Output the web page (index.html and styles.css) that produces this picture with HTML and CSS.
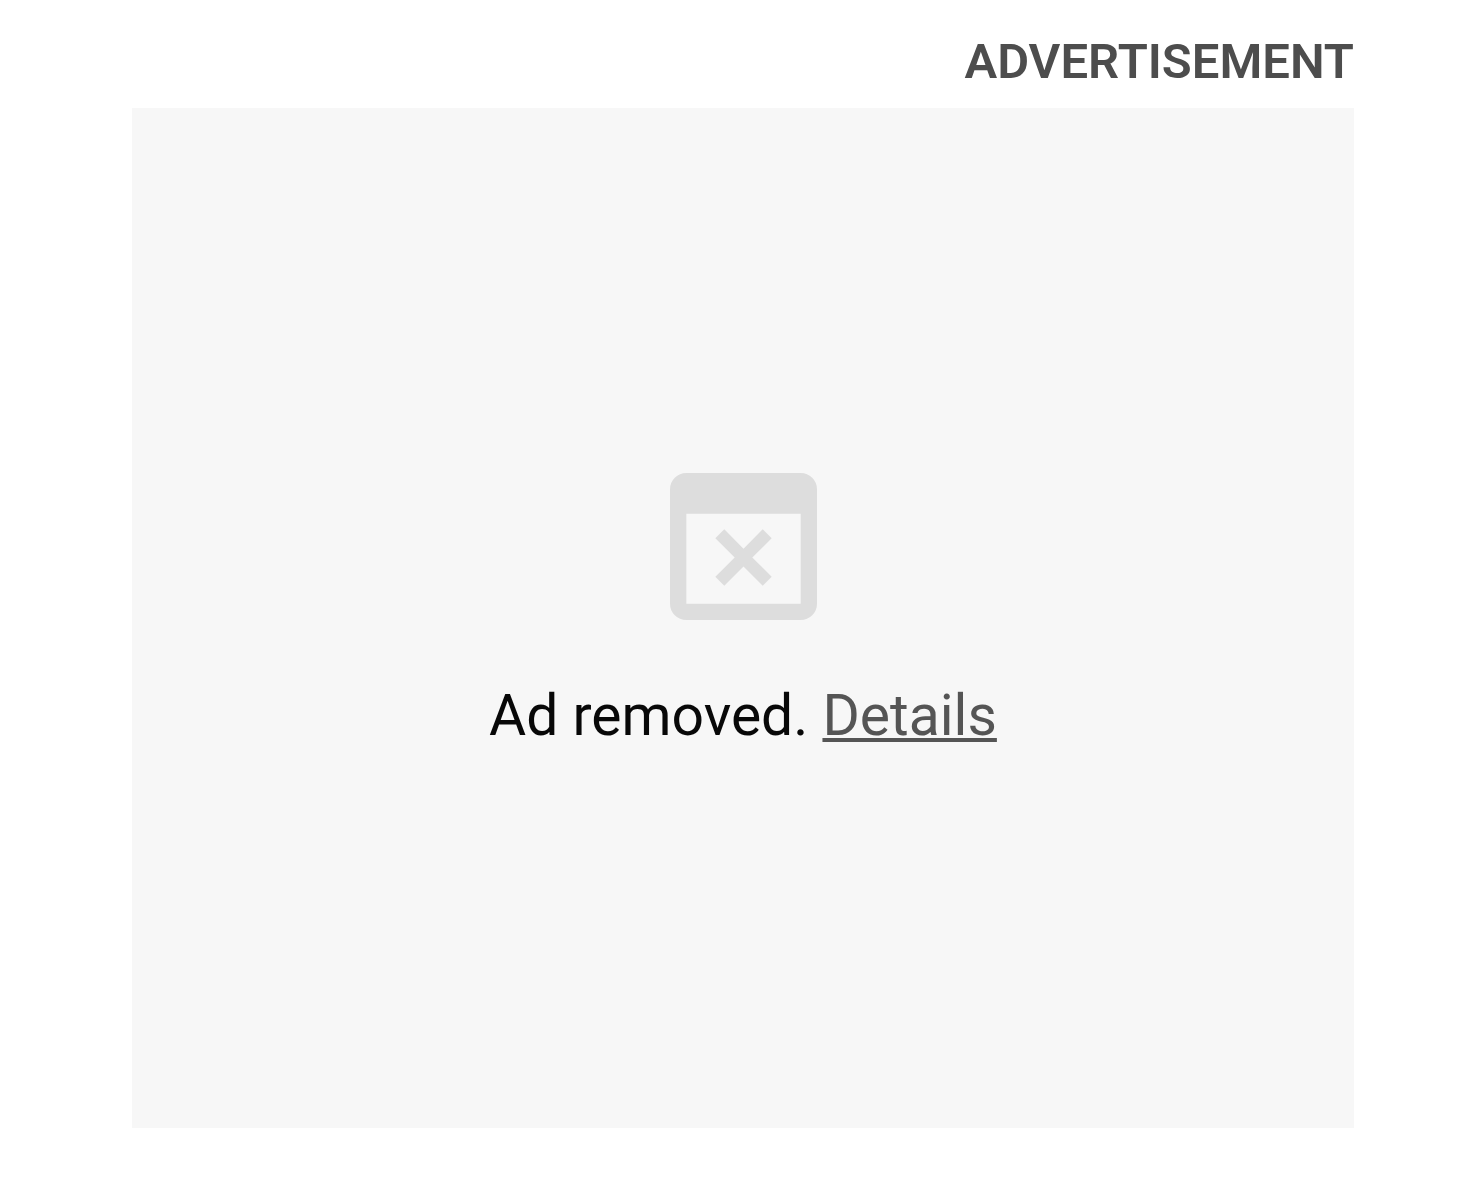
FILE: index.html
```
<!DOCTYPE html>
<html lang="en">
<head>
  <meta charset="UTF-8">
  <meta name="viewport" content="width=device-width, initial-scale=1.0">
  <title>Advertisement</title>
  <link rel="stylesheet" href="styles.css">
</head>
<body>

<aside class="ad">
  <h2 class="ad-label">Advertisement</h2>

  <div class="ad-slot">
    <!-- Closed window icon -->
    <svg class="ad-icon" viewBox="0 0 18 18" aria-hidden="true">
      <path fill-rule="evenodd" d="M2 0h14a2 2 0 0 1 2 2v14a2 2 0 0 1-2 2H2a2 2 0 0 1-2-2V2a2 2 0 0 1 2-2zM2 5v11h14V5z"/>
      <path d="M6.65 6.9L9 9.27l2.35-2.37 1.1 1.1-2.37 2.35 2.37 2.35-1.1 1.12L9 11.45l-2.35 2.37-1.1-1.12 2.37-2.35L5.55 8z"/>
    </svg>
    <p class="ad-text">Ad removed. <a href="#" class="ad-link">Details</a></p>
  </div>
</aside>

</body>
</html>
```

FILE: styles.css
```
* {
  margin: 0;
  padding: 0;
  box-sizing: border-box;
}

body {
  font-family: Roboto, Arial, sans-serif;
  background-color: #fff;
  color: #080808;
}

.ad {
  padding: 32px 106px 52px 132px;
}

/* Label above the slot */
.ad-label {
  margin-bottom: 16px;
  font-size: 49px;
  font-weight: 600;
  line-height: 60px;
  text-align: right;
  text-transform: uppercase;
  color: #4d4d4d;
}

/* Grey placeholder */
.ad-slot {
  display: flex;
  flex-direction: column;
  align-items: center;
  justify-content: center;
  gap: 56px;
  aspect-ratio: 1.198;
  padding-bottom: 8px;
  background-color: #f7f7f7;
}

.ad-icon {
  width: 147px;
  height: 147px;
  fill: #ddd;
}

.ad-text {
  font-size: 57px;
  line-height: 80px;
}

.ad-link {
  color: #555;
  text-decoration: underline;
  text-decoration-thickness: 4px;
  text-underline-offset: 3px;
}
```
